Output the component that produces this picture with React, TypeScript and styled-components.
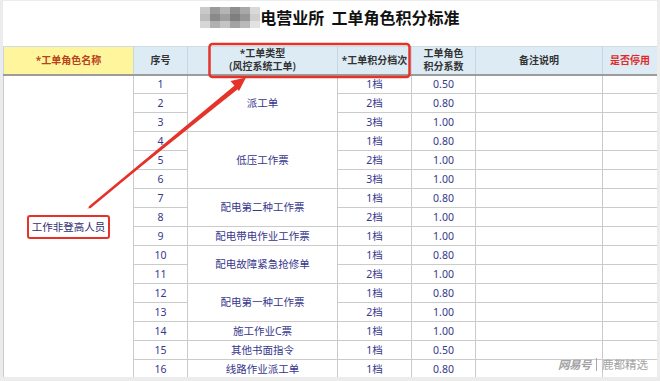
import React from 'react';
import styled, { createGlobalStyle } from 'styled-components';

type Row = { no: number; grade: string; coef: string };
type Group = { name: string; rows: Row[] };

const groups: Group[] = [
  { name: '派工单', rows: [{ no: 1, grade: '1档', coef: '0.50' }, { no: 2, grade: '2档', coef: '0.80' }, { no: 3, grade: '3档', coef: '1.00' }] },
  { name: '低压工作票', rows: [{ no: 4, grade: '1档', coef: '0.80' }, { no: 5, grade: '2档', coef: '1.00' }, { no: 6, grade: '3档', coef: '1.00' }] },
  { name: '配电第二种工作票', rows: [{ no: 7, grade: '1档', coef: '0.80' }, { no: 8, grade: '2档', coef: '1.00' }] },
  { name: '配电带电作业工作票', rows: [{ no: 9, grade: '1档', coef: '1.00' }] },
  { name: '配电故障紧急抢修单', rows: [{ no: 10, grade: '1档', coef: '0.80' }, { no: 11, grade: '2档', coef: '1.00' }] },
  { name: '配电第一种工作票', rows: [{ no: 12, grade: '1档', coef: '0.80' }, { no: 13, grade: '2档', coef: '1.00' }] },
  { name: '施工作业C票', rows: [{ no: 14, grade: '1档', coef: '1.00' }] },
  { name: '其他书面指令', rows: [{ no: 15, grade: '1档', coef: '0.50' }] },
  { name: '线路作业派工单', rows: [{ no: 16, grade: '1档', coef: '0.80' }] },
];

const totalRows = groups.reduce((n, g) => n + g.rows.length, 0);

// pixelated redaction in the title
const mosaic = [
  ['#c9c9c9', '#9a9a9a', '#b5b5b5', '#8e8e8e', '#a8a8a8', '#d9d9d9'],
  ['#bdbdbd', '#8a8a8a', '#9f9f9f', '#7f7f7f', '#969696', '#cfcfcf'],
  ['#d6d6d6', '#b0b0b0', '#c4c4c4', '#a2a2a2', '#b9b9b9', '#e2e2e2'],
];

const GlobalStyle = createGlobalStyle`
  html, body {
    margin: 0;
    padding: 0;
    background: #ececec;
  }
  * { box-sizing: border-box; }
`;

const App: React.FC = () => {
  let first = true;
  return (
    <Page>
      <GlobalStyle />
      <Sheet>
        <Title>
          <Mosaic width="60" height="21" viewBox="0 0 60 21">
            {mosaic.map((line, y) =>
              line.map((c, x) => <rect key={`${x}-${y}`} x={x * 10} y={y * 7} width="10" height="7" fill={c} />)
            )}
          </Mosaic>
          <span>电营业所&nbsp;&nbsp;工单角色积分标准</span>
        </Title>

        <Table>
          <colgroup>
            <col style={{ width: 130 }} />
            <col style={{ width: 54 }} />
            <col style={{ width: 150 }} />
            <col style={{ width: 74 }} />
            <col style={{ width: 64 }} />
            <col style={{ width: 127 }} />
            <col style={{ width: 55 }} />
          </colgroup>
          <thead>
            <tr>
              <Th $tone="role">*工单角色名称</Th>
              <Th>序号</Th>
              <Th>*工单类型<br />(风控系统工单)</Th>
              <Th>*工单积分档次</Th>
              <Th>工单角色<br />积分系数</Th>
              <Th>备注说明</Th>
              <Th $tone="alert">是否停用</Th>
            </tr>
          </thead>
          <tbody>
            {groups.map(g =>
              g.rows.map((r, i) => {
                const showRole = first;
                first = false;
                return (
                  <tr key={r.no}>
                    {showRole && (
                      <Td rowSpan={totalRows}>
                        <RoleTag>工作非登高人员</RoleTag>
                      </Td>
                    )}
                    <Td>{r.no}</Td>
                    {i === 0 && <Td rowSpan={g.rows.length}>{g.name}</Td>}
                    <Td>{r.grade}</Td>
                    <Td>{r.coef}</Td>
                    <Td />
                    <Td />
                  </tr>
                );
              })
            )}
          </tbody>
        </Table>
      </Sheet>

      <Annotation width="660" height="381" viewBox="0 0 660 381">
        <rect x="209.5" y="44" width="200" height="33" rx="3" fill="none" stroke="#e5332a" strokeWidth="2.5" />
        <polygon points="87,209.5 89.5,206.5 237,84.5 238,89" fill="#e5332a" />
        <line x1="90" y1="207" x2="236" y2="86" stroke="#e5332a" strokeWidth="2.6" strokeLinecap="round" />
        <polygon points="246,77.5 239,91 230.5,81" fill="#e5332a" />
      </Annotation>

      <Watermark>
        <Brand>网易号</Brand>
        <Sep />
        <span>鹿都精选</span>
      </Watermark>
    </Page>
  );
};

export default App;

const Page = styled.div`
  position: relative;
  width: 660px;
  height: 381px;
  padding: 1px 3px 0 3px;
  overflow: hidden;
  font-family: 'Noto Sans', 'Noto Sans CJK SC', sans-serif;
`;

const Sheet = styled.div`
  background: #fff;
  height: 376px;
  overflow: hidden;
`;

const Title = styled.div`
  height: 45px;
  display: flex;
  justify-content: center;
  align-items: flex-start;
  padding-top: 6px;
  font-family: 'Noto Sans CJK SC', sans-serif;
  font-size: 16px;
  font-weight: 700;
  color: #111;
  line-height: 21px;
`;

const Mosaic = styled.svg`
  display: block;
  flex: none;
  filter: blur(0.6px);
`;

const Table = styled.table`
  width: 654px;
  table-layout: fixed;
  border-collapse: collapse;
  font-size: 10.5px;
  color: #37378c;
  text-align: center;

  tbody tr {
    height: 19px;
  }
`;

const Th = styled.th<{ $tone?: 'role' | 'alert' }>`
  height: 28px;
  padding: 0;
  font-weight: 600;
  font-size: 10px;
  line-height: 13px;
  white-space: nowrap;
  color: ${p => (p.$tone === 'role' ? '#b5441a' : p.$tone === 'alert' ? '#de2a2a' : '#333')};
  background: ${p => (p.$tone === 'role' ? '#fff59d' : '#ddebf5')};
  border: 1px solid #c6d6e2;
  border-top-color: #d0dbe4;
  border-bottom: 2px solid #9c9c9c;
`;

const Td = styled.td`
  padding: 0;
  line-height: 17px;
  border: 1px solid #cbcbcb;
  background: #fff;
  white-space: nowrap;
`;

const RoleTag = styled.span`
  display: inline-block;
  padding: 2px 3px;
  border: 2.5px solid #e5332a;
  border-radius: 3px;
  color: #2e2e6e;
  font-size: 10.5px;
  line-height: 16px;
`;

const Annotation = styled.svg`
  position: absolute;
  top: 0;
  left: 0;
  pointer-events: none;
`;

const Watermark = styled.div`
  position: absolute;
  right: 12px;
  bottom: 9px;
  display: flex;
  align-items: center;
  gap: 5px;
  font-family: 'Noto Sans CJK SC', sans-serif;
  font-size: 11.5px;
  color: #a3a3a3;
`;

const Brand = styled.span`
  font-style: italic;
  font-weight: 700;
  letter-spacing: -0.5px;
`;

const Sep = styled.i`
  display: block;
  width: 1px;
  height: 13px;
  background: #a8a8a8;
`;
